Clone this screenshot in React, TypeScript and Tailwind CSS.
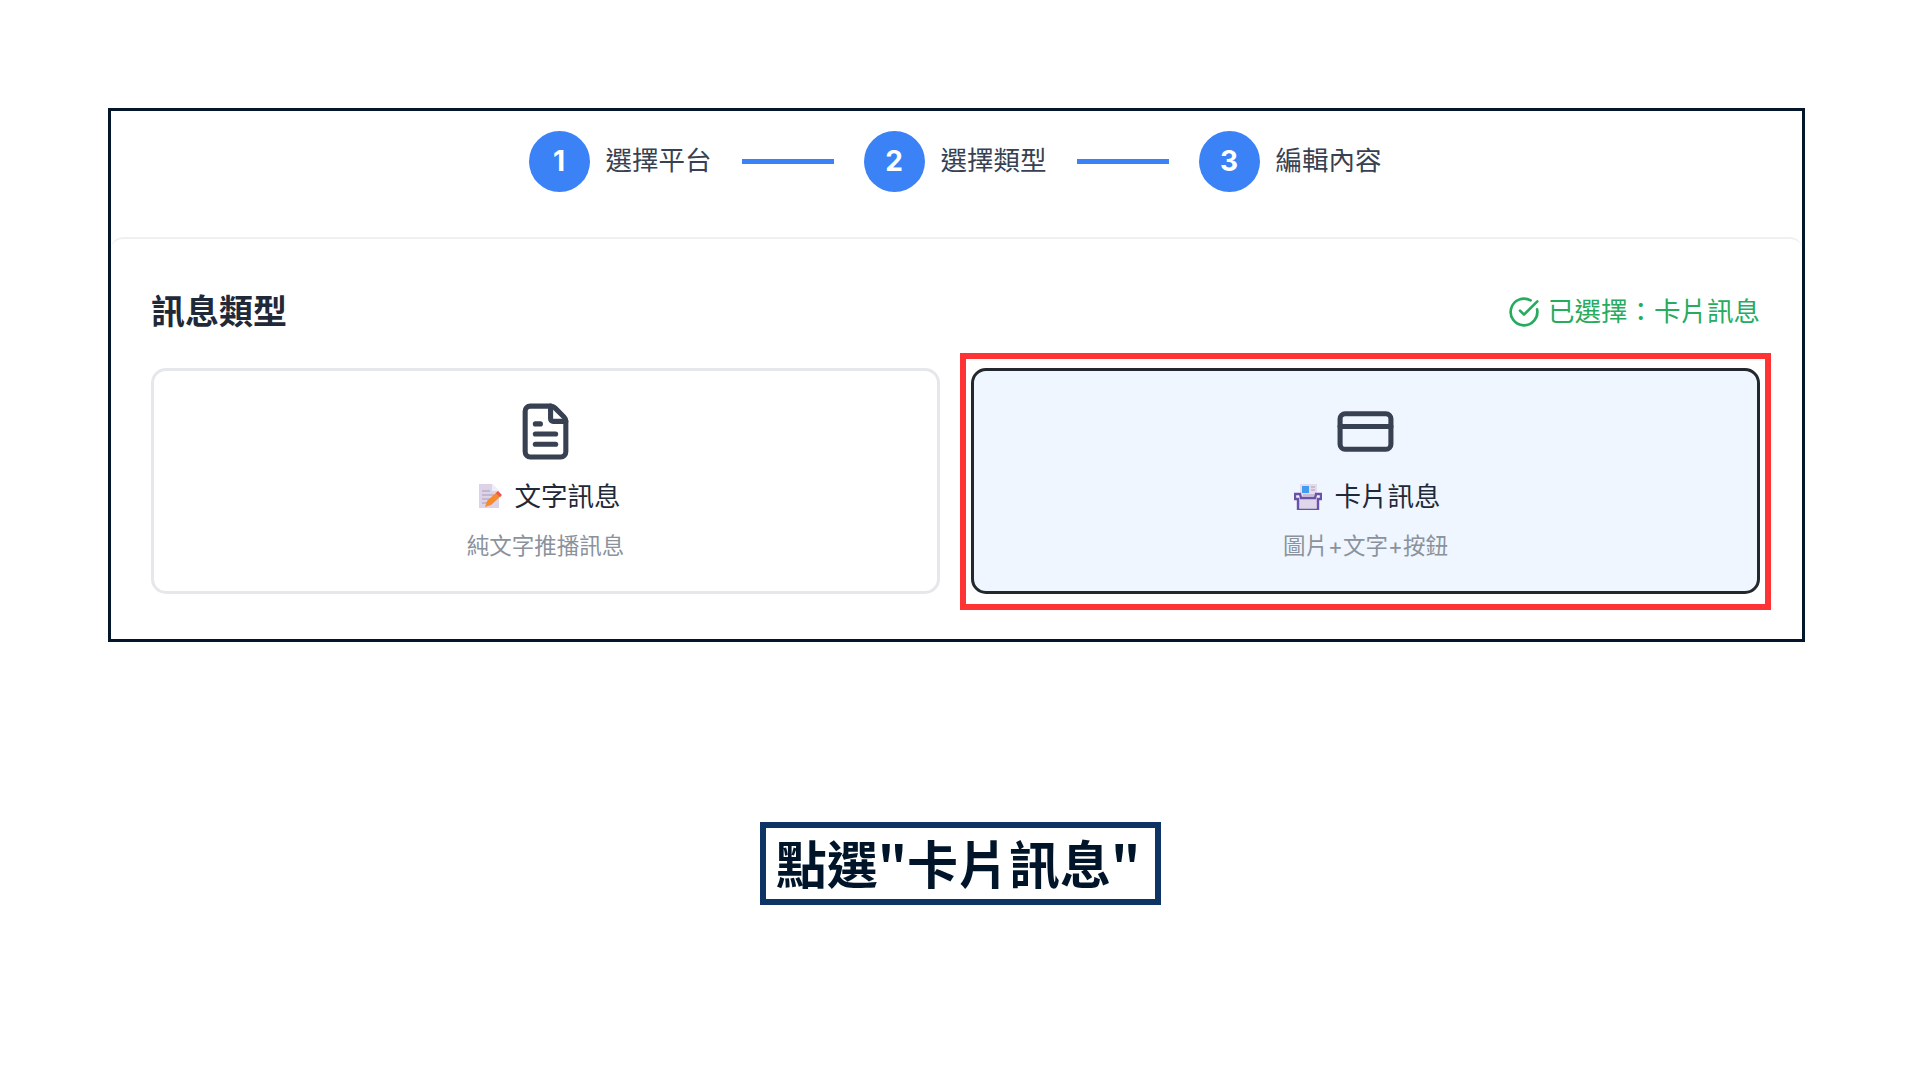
import React from 'react';
import { CircleCheckBig, CreditCard, FileText } from 'lucide-react';

const cjk = "font-['Inter','Noto_Sans_CJK_TC',sans-serif]";

function Step({ num, label }: { num: number; label: string }) {
  return (
    <div className="flex items-center gap-4">
      <div className="flex h-[61px] w-[61px] items-center justify-center rounded-full bg-[#3b82f6] text-[28px] font-bold text-white">
        {num}
      </div>
      <span className="text-[26.5px] text-[#374151]">{label}</span>
    </div>
  );
}

function MemoEmoji() {
  return (
    <svg width="24" height="26" viewBox="0 0 24 26" className="shrink-0">
      <path d="M1 1h13l7 7v17H1z" fill="#ddd3e8" />
      <path d="M14 1l7 7h-7z" fill="#f1ecf6" />
      <path d="M4 8h8M4 12h12M4 16h9M4 20h6" stroke="#a99bb8" strokeWidth="1.2" />
      <path d="M7 24l2-6L19 9l4 4-10 9z" fill="#f58a2e" />
      <path d="M18 10l2-2 4 4-2 2z" fill="#ef5350" />
    </svg>
  );
}

function CardEmoji() {
  return (
    <svg width="28" height="27" viewBox="0 0 28 27" className="shrink-0">
      <rect x="6" y="1" width="17" height="14" fill="#e4dcec" />
      <rect x="8" y="3" width="7" height="7" fill="#3f9cf0" />
      <path d="M17 4h4M17 7h4M9 12h11" stroke="#a99bb8" strokeWidth="1.2" />
      <rect x="4" y="15" width="20" height="11" fill="#e0d6ea" />
      <path d="M1 11h5l1 4h14l1-4h5v5h-3v11H4V16H1z" fill="none" stroke="#6a52a8" strokeWidth="2.4" />
    </svg>
  );
}

export default function App() {
  return (
    <div className={`min-h-screen bg-white pt-[108px] ${cjk}`}>
      <div className="ml-[108px] h-[534px] w-[1697px] border-[3px] border-[#03162b]">
        <div className="flex h-[126px] items-center justify-center pb-[26px] pr-[3px]">
          <Step num={1} label="選擇平台" />
          <div className="mx-[30px] h-[5px] w-[92px] bg-[#3b82f6]" />
          <Step num={2} label="選擇類型" />
          <div className="mx-[30px] h-[5px] w-[92px] bg-[#3b82f6]" />
          <Step num={3} label="編輯內容" />
        </div>

        <div className="rounded-t-xl border-t-2 border-[#f0f0f3] pl-[40px] pr-[42px]">
          <div className="flex h-[129px] items-center justify-between pt-[16px]">
            <h2 className="text-[34px] font-semibold text-[#1f2937]">訊息類型</h2>
            <div className="flex items-center gap-2 text-[26.5px] text-[#26ab5f]">
              <CircleCheckBig size={32} strokeWidth={2} />
              <span>已選擇：卡片訊息</span>
            </div>
          </div>

          <div className="grid grid-cols-2 gap-[31px]">
            <div className="flex h-[226px] flex-col items-center rounded-[15px] border-[3px] border-[#e5e7eb] bg-white pt-[30px]">
              <FileText size={61} strokeWidth={2} className="text-[#374151]" />
              <div className="mt-[14px] flex items-center gap-[13px] text-[26.5px] leading-[40px] text-[#1f2937]">
                <div className="flex w-[31px] justify-end">
                  <MemoEmoji />
                </div>
                <span>文字訊息</span>
              </div>
              <div className="mt-[15px] text-[22.5px] leading-[30px] text-[#8b929c]">純文字推播訊息</div>
            </div>

            <div className="relative">
              <div className="flex h-[226px] flex-col items-center rounded-[15px] border-[3px] border-[#23272e] bg-[#eff6ff] pt-[30px]">
                <CreditCard size={61} strokeWidth={2} className="text-[#374151]" />
                <div className="mt-[14px] flex items-center gap-[13px] text-[26.5px] leading-[40px] text-[#1f2937]">
                  <div className="flex w-[31px] justify-end">
                    <CardEmoji />
                  </div>
                  <span>卡片訊息</span>
                </div>
                <div className="mt-[15px] text-[22.5px] leading-[30px] text-[#8b929c]">圖片+文字+按鈕</div>
              </div>
              <div className="absolute -top-[15px] -right-[11px] -bottom-[16px] -left-[11px] border-[6px] border-[#ff3333]" />
            </div>
          </div>
        </div>
      </div>

      <div className="mx-auto mt-[180px] flex h-[83px] w-[401px] items-center justify-center border-[6px] border-[#0d3464] pr-[4px] pb-[2px] font-['Noto_Sans_CJK_TC',sans-serif] text-[51px] font-bold leading-none text-[#001529]">
        點選"卡片訊息"
      </div>
    </div>
  );
}
